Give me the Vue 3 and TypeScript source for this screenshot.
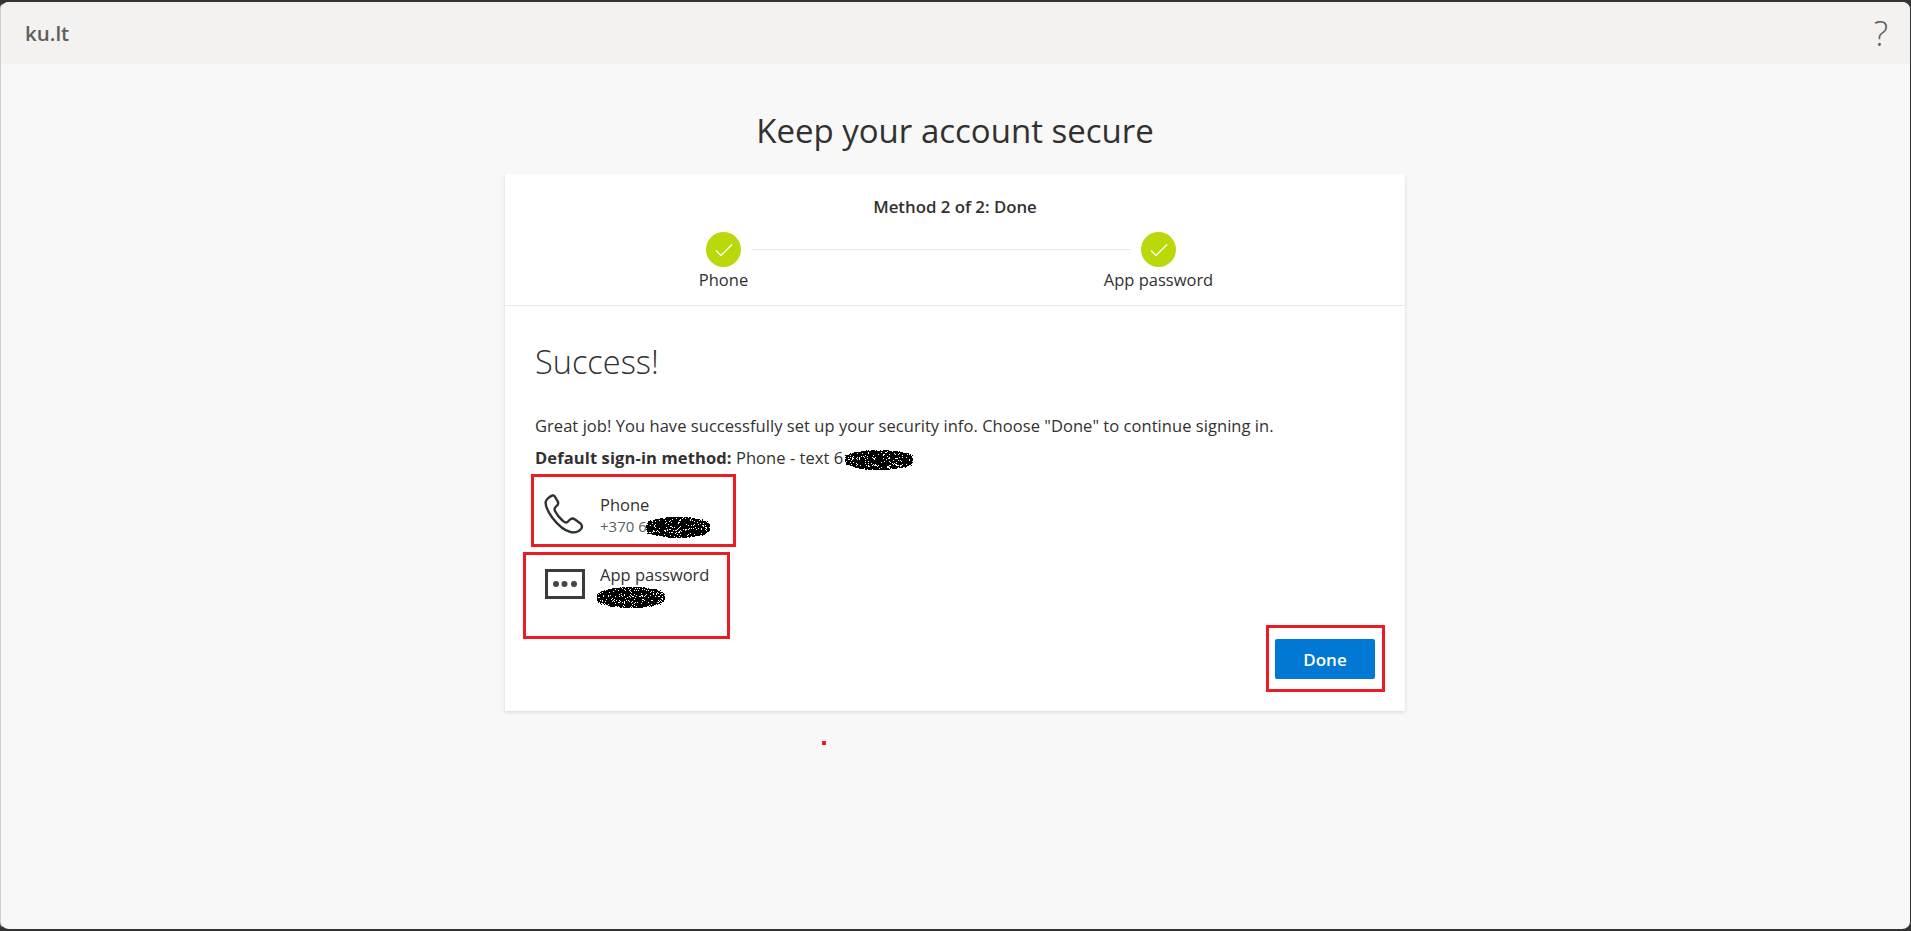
<script setup lang="ts">
function scribble(seed: number, w: number, h: number): string {
  let s = seed
  const rnd = () => {
    s = (s * 16807) % 2147483647
    return s / 2147483647
  }
  let d = ''
  for (let y = 0; y < h; y++) {
    const t = (y + 0.5) / h - 0.5
    const half = Math.sqrt(Math.max(0, 0.25 - t * t)) * w * 1.05
    for (let x = 0; x < w; x++) {
      const off = Math.abs(x + 0.5 - w / 2)
      const inside = off < half
      const fringe = off < half + 3
      const p = inside ? 0.88 : fringe ? 0.3 : 0
      if (rnd() < p) d += `M${x} ${y}h1v1h-1z`
    }
  }
  return d
}
const s1 = scribble(12345, 68, 20)
const s2 = scribble(54321, 64, 21)
const s3 = scribble(99173, 68, 21)
</script>

<template>
  <div class="window">
    <header class="topbar">
      <span class="org">ku.lt</span>
      <span class="help">?</span>
    </header>
    <main class="page">
      <h1 class="title">Keep your account secure</h1>
      <section class="card">
        <div class="wizard">
          <div class="step-title">Method 2 of 2: Done</div>
          <div class="steps">
            <div class="step">
              <span class="badge">
                <svg width="18" height="14" viewBox="0 0 18 14"><path d="M1 7.5 L6 12.5 L17 1.5" fill="none" stroke="#fff" stroke-width="1.2" /></svg>
              </span>
              <span class="step-label">Phone</span>
            </div>
            <div class="connector"></div>
            <div class="step">
              <span class="badge">
                <svg width="18" height="14" viewBox="0 0 18 14"><path d="M1 7.5 L6 12.5 L17 1.5" fill="none" stroke="#fff" stroke-width="1.2" /></svg>
              </span>
              <span class="step-label">App password</span>
            </div>
          </div>
        </div>
        <div class="content">
          <h2 class="success">Success!</h2>
          <p class="line first">Great job! You have successfully set up your security info. Choose "Done" to continue signing in.</p>
          <p class="line"><b>Default sign-in method:</b> Phone - text 6<svg class="scrib" width="68" height="20" viewBox="0 0 68 20"><path :d="s1" fill="#000" /></svg></p>
          <div class="method">
            <svg class="m-icon" width="42" height="42" viewBox="0 0 42 42">
              <path d="M9.5 2.5 C7 3.2 3.5 6 2.8 8.5 C2 12 4.5 18 9.5 25 C14.5 31.5 21 37.5 27.5 39 C31.5 39.8 36 38.5 38 36 C39.5 34 39 32 37.5 30.5 L32 26.5 C30 25 28 25.5 26.5 27 L24.5 29 C23 30 21.5 29.5 19.5 27.5 C16.5 24.8 13.5 21 12 18 C11 16 11.5 15 13 13.5 L14.5 12 C15.5 10.5 15.5 9.5 14.5 8 L12 3.8 C11.5 2.8 10.5 2.2 9.5 2.5 Z" fill="none" stroke="#323130" stroke-width="2.4" stroke-linejoin="round" />
            </svg>
            <div class="m-text">
              <div class="m-name">Phone</div>
              <div class="m-sub">+370 6<svg class="scrib tight" width="64" height="21" viewBox="0 0 64 21"><path :d="s2" fill="#000" /></svg></div>
            </div>
          </div>
          <div class="method second">
            <svg class="m-icon" width="42" height="32" viewBox="0 0 42 32">
              <rect x="3.5" y="1.5" width="37" height="27" fill="none" stroke="#3c3b3a" stroke-width="3" />
              <circle cx="13" cy="15" r="3" fill="#444" /><circle cx="21.5" cy="15" r="3" fill="#444" /><circle cx="31" cy="15" r="3" fill="#444" />
            </svg>
            <div class="m-text">
              <div class="m-name">App password</div>
              <svg class="scrib block" width="68" height="21" viewBox="0 0 68 21"><path :d="s3" fill="#000" /></svg>
            </div>
          </div>
          <div class="actions">
            <button class="done" type="button">Done</button>
          </div>
        </div>
      </section>
      <i class="mark box1"></i>
      <i class="mark box2"></i>
      <i class="mark box3"></i>
      <i class="dot"></i>
    </main>
  </div>
</template>

<style scoped>
.window {
  height: 931px;
  box-sizing: border-box;
  border: 1px solid #333;
  border-left-color: #cfcfcf;
  border-top-width: 2px;
  border-bottom-width: 2px;
  border-radius: 9px;
  overflow: hidden;
  display: flex;
  flex-direction: column;
  background: #f8f8f8;
  font-family: "Open Sans", "Noto Sans", sans-serif;
  color: #323130;
}
.topbar {
  height: 62px;
  flex: none;
  background: #f3f2f1;
  display: flex;
  align-items: center;
  justify-content: space-between;
  padding: 0 22px 0 24px;
}
.org {
  font-size: 20.5px;
  font-weight: 600;
  color: #605e5c;
}
.help {
  font-weight: 300;
  font-size: 34px;
  color: #605e5c;
}
.page {
  position: relative;
  flex: 1;
  display: flex;
  flex-direction: column;
  align-items: center;
  padding-right: 1px;
}
.title {
  margin: 43px 0 0;
  height: 67px;
  font-size: 33px;
  line-height: 47px;
  font-weight: 400;
  color: #323130;
}
.card {
  width: 900px;
  height: 537px;
  background: #fff;
  box-shadow: 0 1.6px 3.6px rgba(0, 0, 0, 0.13), 0 0.3px 0.9px rgba(0, 0, 0, 0.11);
  display: flex;
  flex-direction: column;
}
.wizard {
  height: 132px;
  flex: none;
  box-sizing: border-box;
  border-bottom: 1px solid #edebe9;
  padding-top: 22px;
}
.step-title {
  text-align: center;
  font-size: 16.8px;
  font-weight: 600;
  line-height: 22px;
}
.steps {
  display: flex;
  justify-content: center;
  margin-top: 14px;
  padding-right: 28px;
}
.step {
  width: 120px;
  display: flex;
  flex-direction: column;
  align-items: center;
}
.badge {
  width: 35px;
  height: 35px;
  border-radius: 50%;
  background: #bad80a;
  display: flex;
  align-items: center;
  justify-content: center;
}
.step-label {
  margin-top: 1px;
  font-size: 16.5px;
  line-height: 24px;
  white-space: nowrap;
}
.connector {
  width: 380px;
  height: 1px;
  margin: 17px -32.5px 0;
  background: #edebe9;
}
.content {
  flex: 1;
  padding: 35px 30px 0;
  display: flex;
  flex-direction: column;
}
.success {
  margin: 0;
  font-size: 32.5px;
  font-weight: 300;
  line-height: 42px;
}
.line {
  margin: 0;
  font-size: 16.5px;
  line-height: 32px;
  white-space: nowrap;
  letter-spacing: 0.05px;
}
.line b {
  letter-spacing: 0.12px;
}
.first {
  margin-top: 27px;
}
.scrib {
  vertical-align: middle;
  margin-left: 2px;
}
.tight {
  margin-left: -1px;
}
.block {
  display: block;
  margin: 1px 0 0 -3px;
}
.method {
  display: flex;
  height: 78px;
  flex: none;
  padding-left: 8px;
}
.second {
  height: 87px;
}
.m-icon {
  flex: none;
  margin-top: 19px;
}
.second .m-icon {
  margin-top: 17px;
}
.m-text {
  margin-left: 15px;
}
.m-name {
  font-size: 16.5px;
  line-height: 22px;
  margin-top: 20px;
  white-space: nowrap;
}
.second .m-name {
  margin-top: 12px;
}
.m-sub {
  font-size: 15px;
  line-height: 20px;
  color: #605e5c;
  white-space: nowrap;
}
.actions {
  display: flex;
  justify-content: flex-end;
}
.done {
  width: 100px;
  height: 40px;
  margin: 0;
  border: 0;
  border-radius: 2px;
  background: #0078d4;
  color: #fff;
  font: 600 17px "Open Sans", sans-serif;
}
.mark {
  position: absolute;
  box-sizing: border-box;
  border: 3px solid #ed1c24;
  display: block;
}
.box1 {
  left: 530px;
  top: 410px;
  width: 205px;
  height: 73px;
}
.box2 {
  left: 522px;
  top: 488px;
  width: 207px;
  height: 87px;
}
.box3 {
  left: 1265px;
  top: 561px;
  width: 119px;
  height: 67px;
}
.dot {
  position: absolute;
  left: 821px;
  top: 677px;
  width: 4px;
  height: 4px;
  background: #ed1c24;
}
</style>

<style>
body {
  background: #333;
}
</style>
